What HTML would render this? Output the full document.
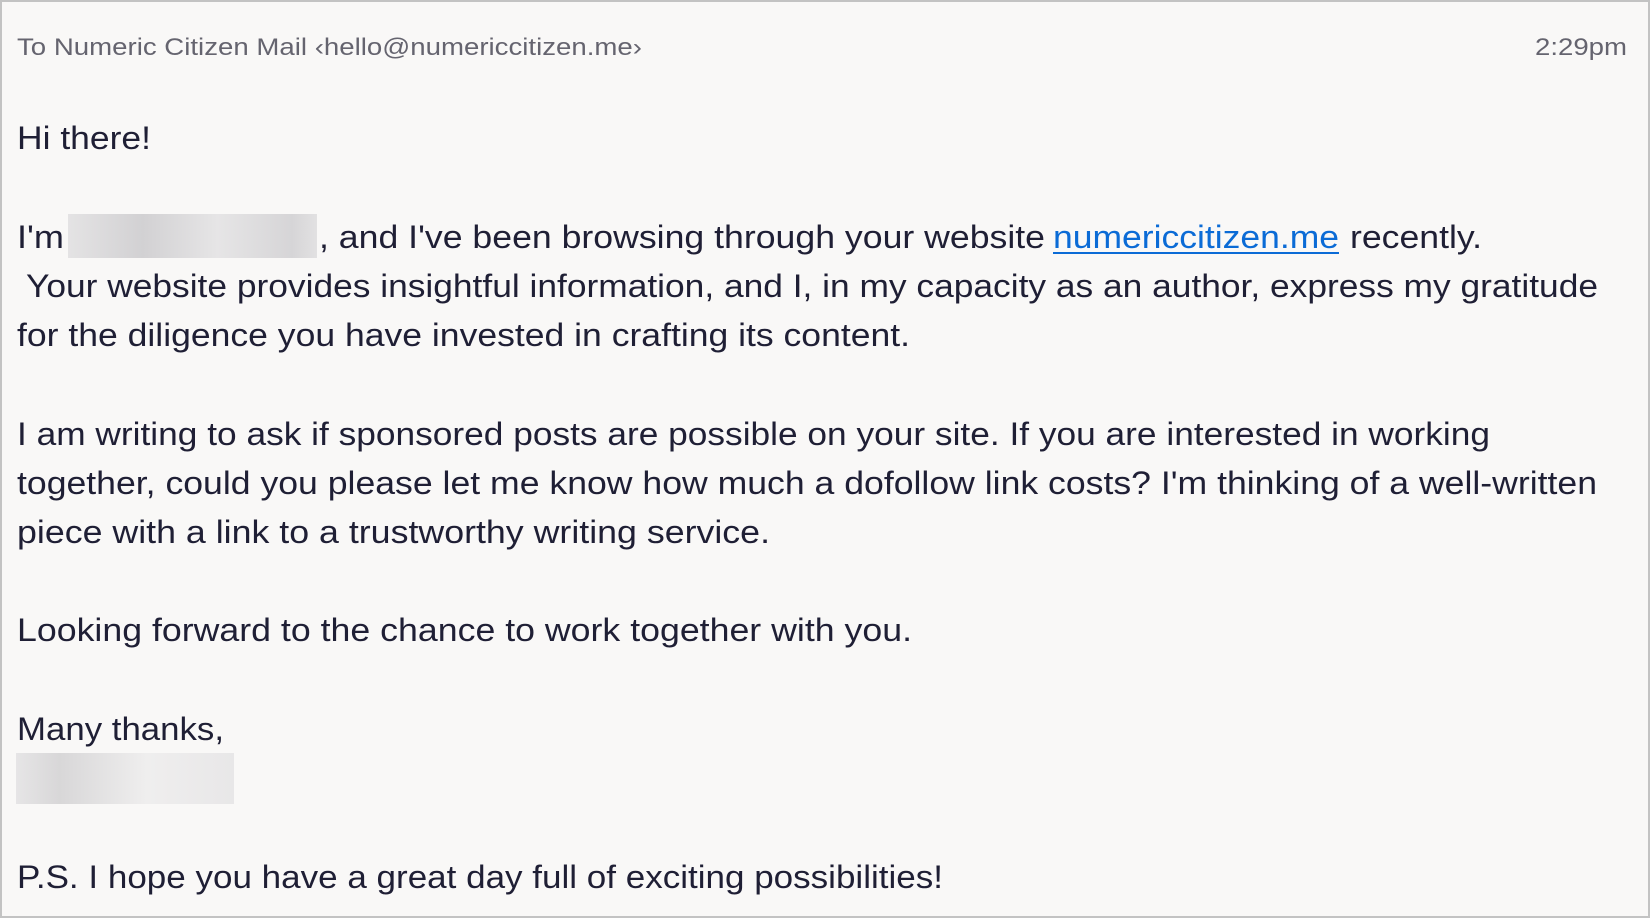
<!DOCTYPE html>
<html><head><meta charset="utf-8"><style>
html,body{margin:0;padding:0;width:1650px;height:918px;overflow:hidden;background:#f9f8f7}
svg{display:block}
text{font-family:"Liberation Sans",sans-serif}
.b{font-size:32px;fill:#1f1f35}
.h{font-size:24px;fill:#65646f}
</style></head><body>
<svg width="1650" height="918" viewBox="0 0 1650 918" xmlns="http://www.w3.org/2000/svg">
<defs>
<linearGradient id="g1" x1="0" x2="1"><stop offset="0" stop-color="#e4e3e4"/><stop offset="0.3" stop-color="#d2d1d3"/><stop offset="0.6" stop-color="#e6e5e6"/><stop offset="0.9" stop-color="#d6d5d7"/><stop offset="1" stop-color="#e2e1e2"/></linearGradient>
<linearGradient id="g2" x1="0" x2="1"><stop offset="0" stop-color="#e6e5e6"/><stop offset="0.2" stop-color="#d8d7d8"/><stop offset="0.6" stop-color="#efeeee"/><stop offset="1" stop-color="#e8e7e8"/></linearGradient>
</defs>
<rect x="1" y="1" width="1648" height="916" fill="#f9f8f7" stroke="#c3c3c3" stroke-width="2"/>
<text class="h" x="17" y="55" textLength="625" lengthAdjust="spacingAndGlyphs">To Numeric Citizen Mail ‹hello@numericcitizen.me›</text>
<text class="h" x="1535" y="55" textLength="92" lengthAdjust="spacingAndGlyphs">2:29pm</text>
<text class="b" x="17" y="149" textLength="134" lengthAdjust="spacingAndGlyphs">Hi there!</text>
<text class="b" x="17" y="248" textLength="47" lengthAdjust="spacingAndGlyphs">I'm</text>
<rect x="68" y="214" width="249" height="44" fill="url(#g1)"/>
<text class="b" x="319" y="248" textLength="726" lengthAdjust="spacingAndGlyphs">, and I've been browsing through your website</text>
<text class="b" x="1053" y="248" textLength="286" lengthAdjust="spacingAndGlyphs" style="fill:#0b6bd6">numericcitizen.me</text>
<rect x="1053" y="252" width="286" height="2" fill="#0b6bd6"/>
<text class="b" x="1350" y="248" textLength="132" lengthAdjust="spacingAndGlyphs">recently.</text>
<text class="b" x="26" y="297" textLength="1572" lengthAdjust="spacingAndGlyphs">Your website provides insightful information, and I, in my capacity as an author, express my gratitude</text>
<text class="b" x="17" y="346" textLength="893" lengthAdjust="spacingAndGlyphs">for the diligence you have invested in crafting its content.</text>
<text class="b" x="17" y="445" textLength="1473" lengthAdjust="spacingAndGlyphs">I am writing to ask if sponsored posts are possible on your site. If you are interested in working</text>
<text class="b" x="17" y="494" textLength="1580" lengthAdjust="spacingAndGlyphs">together, could you please let me know how much a dofollow link costs? I'm thinking of a well-written</text>
<text class="b" x="17" y="543" textLength="753" lengthAdjust="spacingAndGlyphs">piece with a link to a trustworthy writing service.</text>
<text class="b" x="17" y="641" textLength="895" lengthAdjust="spacingAndGlyphs">Looking forward to the chance to work together with you.</text>
<text class="b" x="17" y="740" textLength="207" lengthAdjust="spacingAndGlyphs">Many thanks,</text>
<rect x="16" y="753" width="218" height="51" fill="url(#g2)"/>
<text class="b" x="17" y="888" textLength="926" lengthAdjust="spacingAndGlyphs">P.S. I hope you have a great day full of exciting possibilities!</text>
</svg>
</body></html>
